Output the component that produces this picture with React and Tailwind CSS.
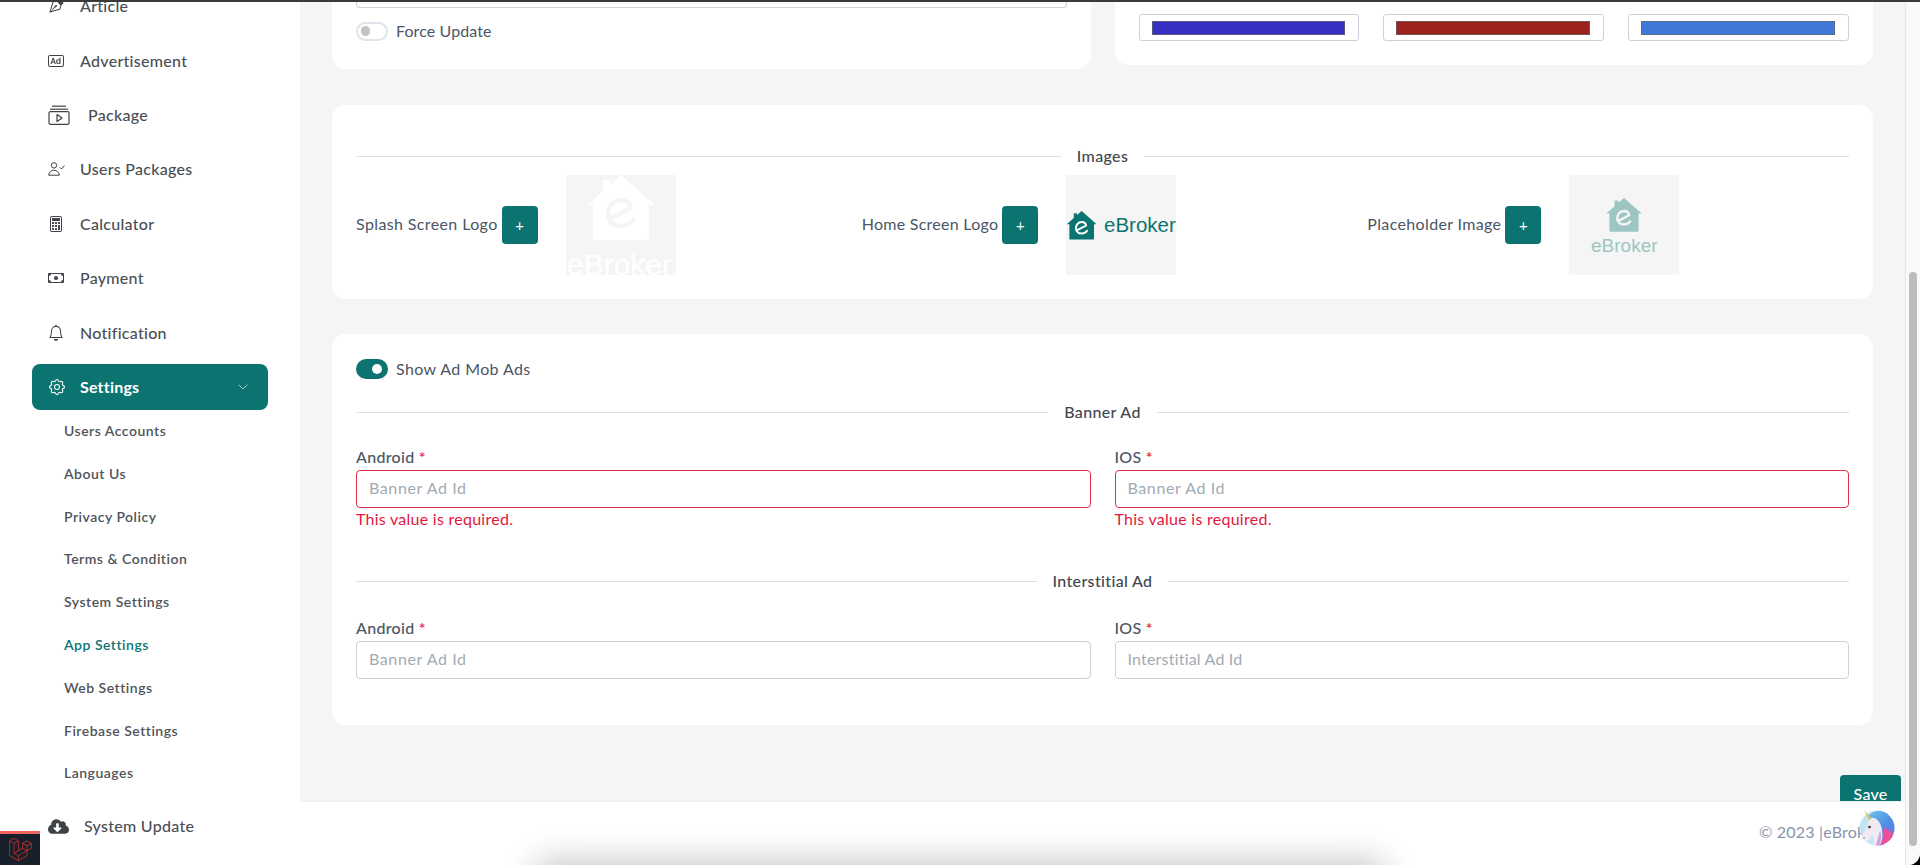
import React from "react";
import { BsBadgeAd, BsCalculator, BsCash, BsBell, BsVectorPen } from "react-icons/bs";
import { TbSettings } from "react-icons/tb";
import { FaCloudDownloadAlt } from "react-icons/fa";
import { SiLaravel } from "react-icons/si";
import { LuChevronDown } from "react-icons/lu";

function PackageIcon() {
  return (
    <svg viewBox="0 0 22 20" width="22" height="20" fill="none" stroke="#3f4347">
      <path d="M4 1.2 H18" strokeWidth="1.2" />
      <path d="M2 4.2 H20" strokeWidth="1.2" />
      <rect x="1" y="6.7" width="20" height="12.6" rx="1.2" strokeWidth="1.2" />
      <path d="M9 9.5 L14 13 L9 16.5 Z" strokeWidth="1.2" strokeLinejoin="round" />
    </svg>
  );
}

function UserCheckIcon() {
  return (
    <svg viewBox="0 0 17 14" width="17" height="14" fill="none" stroke="#3f4347" strokeWidth="1">
      <circle cx="6" cy="3.4" r="2.7" />
      <path d="M0.7 13.2 C0.7 10 3.5 8.2 6 8.2 C8.5 8.2 11.3 10 11.3 13.2 Z" strokeLinejoin="round" />
      <path d="M12 5.4 L13.6 7 L16.4 3.6" />
    </svg>
  );
}

function NavItem({ icon, label, gap = "w-[32px]" }) {
  return (
    <div className="h-[54.4px] shrink-0 flex items-center pl-[48px] text-[16px] font-medium tracking-[0.28px] text-[#4a4f55]">
      <span className={`${gap} shrink-0 flex items-center text-[#3f4347]`}>{icon}</span>
      <span>{label}</span>
    </div>
  );
}

function SubItem({ label, active }) {
  return (
    <div className={`h-[42.8px] shrink-0 flex items-center pl-[64px] text-[14px] font-semibold tracking-[0.5px] ${active ? "text-[#0c7470]" : "text-[#4f5459]"}`}>
      {label}
    </div>
  );
}

function Sidebar() {
  const subs = ["Users Accounts", "About Us", "Privacy Policy", "Terms & Condition", "System Settings", "App Settings", "Web Settings", "Firebase Settings", "Languages"];
  return (
    <aside className="w-[300px] shrink-0 bg-white flex flex-col overflow-hidden">
      <div className="mt-[-23px] flex flex-col">
        <NavItem icon={<BsVectorPen size={16} />} label="Article" />
        <NavItem icon={<BsBadgeAd size={16} />} label="Advertisement" />
        <NavItem icon={<PackageIcon />} gap="w-[40px]" label="Package" />
        <NavItem icon={<UserCheckIcon />} label="Users Packages" />
        <NavItem icon={<BsCalculator size={16} />} label="Calculator" />
        <NavItem icon={<BsCash size={16} />} label="Payment" />
        <NavItem icon={<BsBell size={16} />} label="Notification" />
        <div className="h-[54.4px] shrink-0 flex items-center">
          <div className="ml-[32px] w-[236px] h-[46px] rounded-[8px] bg-[#0c7470] flex items-center pl-[15px] pr-[17px] text-white text-[16px] font-bold tracking-[0.2px]">
            <span className="w-[33px] shrink-0 flex items-center">
              <TbSettings size={20} strokeWidth={1.3} />
            </span>
            <span className="flex-1">Settings</span>
            <LuChevronDown size={16} strokeWidth={1.2} className="text-[#cfe3e2]" />
          </div>
        </div>
        <div className="mt-[-5px] flex flex-col">
          {subs.map((s) => (
            <SubItem key={s} label={s} active={s === "App Settings"} />
          ))}
        </div>
        <div className="mt-[5px]">
          <NavItem icon={<FaCloudDownloadAlt size={21} />} gap="w-[36px]" label="System Update" />
        </div>
      </div>
    </aside>
  );
}

function Toggle({ on }) {
  return on ? (
    <span className="w-[32px] h-[20px] rounded-full bg-[#0c7470] flex items-center justify-end pr-[6px] shrink-0">
      <span className="w-[10px] h-[10px] rounded-full bg-white" />
    </span>
  ) : (
    <span className="w-[32px] h-[19px] rounded-full bg-white border-2 border-[#e1e3ea] flex items-center pl-[3px] shrink-0">
      <span className="w-[9px] h-[10px] rounded-full bg-[#c4c4c4]" />
    </span>
  );
}

function Divider({ label }) {
  return (
    <div className="flex items-center gap-4">
      <div className="flex-1 h-px bg-[#dcdfe3]" />
      <span className="text-[16px] font-medium tracking-[0.35px] text-[#41474f] leading-[20px]">{label}</span>
      <div className="flex-1 h-px bg-[#dcdfe3]" />
    </div>
  );
}

function Field({ label, placeholder, error, track = "tracking-[0.6px]" }) {
  return (
    <div className="flex flex-col">
      <label className="text-[16px] font-medium tracking-[0.3px] text-[#4b5565] leading-[20px] h-[20px]">
        {label} <span className="text-[#e3173e]">*</span>
      </label>
      <div className={`mt-[3px] h-[38px] rounded-[4px] border bg-white px-[12px] pb-[2px] flex items-center text-[16px] text-[#a2aab4] ${track} ${error ? "border-[#dc2e45]" : "border-[#ccd1d8]"}`}>
        {placeholder}
      </div>
      {error && <div className="mt-[1px] h-[20px] leading-[20px] text-[16px] tracking-[0.26px] text-[#e3173e]">This value is required.</div>}
    </div>
  );
}

function House({ tx, ty, s, fill, eColor }) {
  return (
    <g transform={`translate(${tx} ${ty}) scale(${s})`}>
      <path fill={fill} d="M55 0 L89 30 L83 30 L83 63 Q83 65 81 65 L29 65 Q27 65 27 63 L27 30 L21 30 L37 16 L37 5 L44 5 L44 9 Z" />
      <g transform="translate(55 38)">
        <path fill="none" stroke={eColor} strokeWidth="4.5" strokeLinecap="round" d="M-9 5 L10 -5 C9 -11 4 -13 0 -13 C-8 -13 -13 -6 -13 1 C-13 9 -7 13 0 13 C5 13 9 11 12 7" />
      </g>
    </g>
  );
}

function LogoBox({ kind }) {
  return (
    <div className="w-[110px] h-[100px] shrink-0 bg-[#f5f5f5]">
      <svg viewBox="0 0 110 100" width="110" height="100" className="block">
        {kind === 1 && (
          <>
            <House tx={0} ty={0} s={1} fill="#ffffff" eColor="#f5f5f5" />
            <text x="1" y="100" fontSize="30" fill="#ffffff" className="font-['Liberation_Sans',sans-serif]">eBroker</text>
          </>
        )}
        {kind === 2 && (
          <>
            <House tx={-8.5} ty={36} s={0.44} fill="#0c7470" eColor="#ffffff" />
            <text x="38" y="57" fontSize="20.5" fill="#0c7470" className="font-['Liberation_Sans',sans-serif]">eBroker</text>
          </>
        )}
        {kind === 3 && (
          <>
            <House tx={26.4} ty={23} s={0.52} fill="#9cc5c3" eColor="#f5f5f5" />
            <text x="22" y="77" fontSize="19" fill="#9cc5c3" className="font-['Liberation_Sans',sans-serif]">eBroker</text>
          </>
        )}
      </svg>
    </div>
  );
}

function ImageCol({ label, kind, track }) {
  return (
    <div className="flex items-center h-[100px]">
      <span className={`text-[16px] text-[#4b5565] -mt-[3px] ${track}`}>{label}</span>
      <button className="ml-[4px] w-[36px] h-[38px] rounded-[4px] bg-[#0c7470] text-white text-[15px] flex items-center justify-center">+</button>
      <div className="ml-[28px]">
        <LogoBox kind={kind} />
      </div>
    </div>
  );
}

function Swatch({ color, w }) {
  return (
    <div className={`${w} h-[27px] rounded-[3px] border border-[#ccd1d8] bg-white flex items-center justify-center`}>
      <div className={`w-[calc(100%-25px)] h-[14px] border border-[#666666]/70 ${color}`} />
    </div>
  );
}

function Avatar() {
  return (
    <svg viewBox="0 0 36 36" width="36" height="36" className="absolute left-[1559px] top-[8px] overflow-visible">
      <defs>
        <clipPath id="avatarClip"><circle cx="18" cy="18" r="17.5" /></clipPath>
        <linearGradient id="maneGrad" x1="0" y1="0" x2="0.6" y2="1">
          <stop offset="0" stopColor="#6fc3e8" />
          <stop offset="0.55" stopColor="#4f8fe6" />
          <stop offset="1" stopColor="#7a6fe0" />
        </linearGradient>
      </defs>
      <g clipPath="url(#avatarClip)">
        <rect width="36" height="36" fill="#c3e4f2" />
        <path d="M9 7 C14 -2 30 -2 36 12 L36 36 L18 36 C22 26 20 14 12 9 Z" fill="url(#maneGrad)" />
        <path d="M25 18 C31 20 35 24 36 30 L30 37 L20 37 C24 30 25 24 25 18 Z" fill="#ee4f9b" />
        <path d="M12 8 C17 7 22 12 23 20 C24 27 23 32 20 37 L14 37 C15 31 15 28 13 25 C11 29 8 32 5 31 C3 30 2 28 3 26 L9 15 C9 12 10 9 12 8 Z" fill="#f1eaf3" />
        <path d="M21 20 C23 26 22 32 20 37 L16 37 C18 32 20 26 21 20 Z" fill="#c7a6dc" />
        <circle cx="10.5" cy="17" r="1.3" fill="#2e2a33" />
        <circle cx="5" cy="28" r="0.7" fill="#7a6a78" />
      </g>
      <path d="M5 0 L12.5 8.5 L10 10.5 Z" fill="#d9c66a" />
    </svg>
  );
}

export default function App() {
  return (
    <div className="relative w-[1920px] h-[865px] overflow-hidden bg-black font-['Lato',sans-serif]">
      <div className="w-full h-full rounded-br-[12px] rounded-bl-[6px] overflow-hidden bg-white flex flex-col">
        <div className="h-[2px] shrink-0 bg-[#3a3a3a]" />
        <div className="flex-1 flex min-h-0">
          <Sidebar />
          <main className="flex-1 flex flex-col min-w-0">
            <div className="h-[800px] shrink-0 bg-[#f5f5f5] overflow-hidden flex flex-col pl-[32px] pr-[32px] border-b border-[#f0f0f0]">
              <div className="grid grid-cols-2 gap-[24px] items-start">
                <div className="h-[67px] bg-white rounded-b-[14px] px-[24px]">
                  <div className="h-[6px] border border-t-0 border-[#ccd1d8] rounded-b-[4px]" />
                  <div className="mt-[11px] flex items-center gap-[8px]">
                    <Toggle />
                    <span className="text-[16px] tracking-[0.1px] text-[#4b5565]">Force Update</span>
                  </div>
                </div>
                <div className="h-[63px] bg-white rounded-b-[14px] px-[24px] pt-[12px] flex gap-[24px]">
                  <Swatch color="bg-[#3730c4]" w="w-[220px]" />
                  <Swatch color="bg-[#9b231b]" w="w-[221px]" />
                  <Swatch color="bg-[#3f78d8]" w="w-[221px]" />
                </div>
              </div>

              <section className="mt-[36px] h-[194px] shrink-0 bg-white rounded-[14px] px-[24px] pt-[41px]">
                <Divider label="Images" />
                <div className="mt-[9px] grid grid-cols-3 gap-x-[24px]">
                  <ImageCol label="Splash Screen Logo" kind={1} track="tracking-[0.38px]" />
                  <ImageCol label="Home Screen Logo" kind={2} track="tracking-[0.27px]" />
                  <ImageCol label="Placeholder Image" kind={3} track="tracking-[0.35px]" />
                </div>
              </section>

              <section className="mt-[35px] h-[391px] shrink-0 bg-white rounded-[14px] px-[24px] pt-[23px]">
                <div className="flex items-center gap-[8px]">
                  <Toggle on />
                  <span className="text-[16px] tracking-[0.4px] text-[#4b5565]">Show Ad Mob Ads</span>
                </div>
                <div className="mt-[21px]">
                  <Divider label="Banner Ad" />
                </div>
                <div className="mt-[25px] grid grid-cols-2 gap-[24px]">
                  <Field label="Android" placeholder="Banner Ad Id" error />
                  <Field label="IOS" placeholder="Banner Ad Id" error />
                </div>
                <div className="mt-[42px]">
                  <Divider label="Interstitial Ad" />
                </div>
                <div className="mt-[27px] grid grid-cols-2 gap-[24px]">
                  <Field label="Android" placeholder="Banner Ad Id" />
                  <Field label="IOS" placeholder="Interstitial Ad Id" track="tracking-[0.2px]" />
                </div>
              </section>

              <div className="mt-[50px] self-end mr-[-28px] w-[61px] h-[40px] shrink-0 rounded-t-[4px] bg-[#0c7470] text-white text-[16px] font-medium tracking-[0.2px] flex justify-center pt-[7px]">
                Save
              </div>
            </div>
            <footer className="relative flex-1 bg-white">
              <span className="absolute left-[1459px] top-[18px] text-[16px] tracking-[0.2px] text-[#8a93ad] whitespace-nowrap">© 2023 |eBroker</span>
              <Avatar />
            </footer>
          </main>
          <div className="w-[15px] shrink-0 bg-[#fafafa] border-l border-[#e6e6e6] pl-[3px]">
            <div className="mt-[270px] w-[8px] h-[574px] rounded-full bg-[#bdbdbd]" />
          </div>
        </div>
      </div>

      <div className="absolute left-0 bottom-0 w-[40px] h-[34px] bg-[#18202c] border-t-[3px] border-[#f4645f] flex items-center justify-center">
        <SiLaravel size={23} className="text-[#c9302c]" />
      </div>

      <div className="absolute left-[545px] top-[872px] w-[830px] h-[20px] rounded-full shadow-[0_0_32px_14px_rgba(0,0,0,0.2)]" />
    </div>
  );
}
